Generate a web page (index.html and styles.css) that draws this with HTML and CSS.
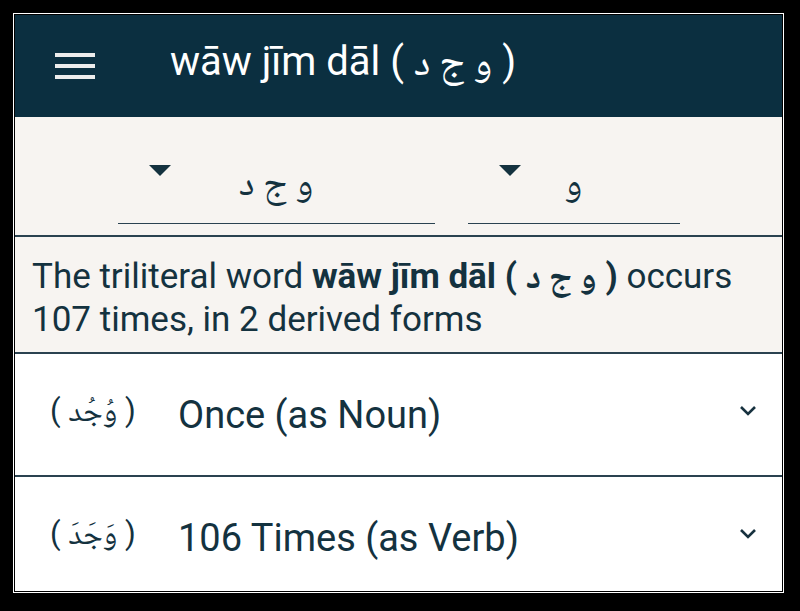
FILE: index.html
```html
<!DOCTYPE html>
<html lang="en">
<head>
    <meta charset="UTF-8">
    <meta name="viewport" content="width=device-width, initial-scale=1.0">
    <title>wāw jīm dāl</title>
    <link rel="stylesheet" href="styles.css">
</head>
<body>

    <div class="frame">
        <div class="screen">

            <header class="app-bar">
                <span class="menu-icon">
                    <span></span><span></span><span></span>
                </span>
                <h1 class="title">wāw jīm dāl ( <span class="ar">و ج د</span> )</h1>
            </header>

            <div class="pickers">
                <div class="picker picker-root">
                    <span class="caret"></span>
                    <span class="picker-value ar">و ج د</span>
                </div>
                <div class="picker picker-letter">
                    <span class="caret"></span>
                    <span class="picker-value ar">و</span>
                </div>
            </div>

            <p class="summary">
                The triliteral word <b>wāw jīm dāl ( <span class="ar">و ج د</span> )</b> occurs<br>
                107 times, in 2 derived forms
            </p>

            <ul class="forms">
                <li class="form-row">
                    <span class="form-ar">( <span class="ar">وُجُد</span> )</span>
                    <span class="form-label">Once (as Noun)</span>
                    <svg class="chevron" width="20" height="12" viewBox="0 0 20 12">
                        <path d="M3 2 L10 9 L17 2" fill="none" stroke="#17323f" stroke-width="2.6"/>
                    </svg>
                </li>
                <li class="form-row">
                    <span class="form-ar">( <span class="ar">وَجَدَ</span> )</span>
                    <span class="form-label">106 Times (as Verb)</span>
                    <svg class="chevron" width="20" height="12" viewBox="0 0 20 12">
                        <path d="M3 2 L10 9 L17 2" fill="none" stroke="#17323f" stroke-width="2.6"/>
                    </svg>
                </li>
            </ul>

        </div>
    </div>

</body>
</html>
```

FILE: styles.css
```css
body {
    margin: 0;
    padding: 13px 0 0 13px;
    background-color: #000;
    font-family: Roboto, "Noto Sans", sans-serif;
    color: #14323f;
}
.frame {
    width: 771px;
    height: 580px;
    border: 1px solid #fff;
    box-sizing: border-box;
}
.screen {
    height: 100%;
    border: 1px solid #000;
    box-sizing: border-box;
    background-color: #fff;
    overflow: hidden;
}
.ar {
    font-family: "Noto Naskh Arabic", "DejaVu Sans", serif;
}

/* top bar */
.app-bar {
    height: 102px;
    background-color: #0b2f40;
    display: flex;
    align-items: center;
    padding-left: 40px;
}
.menu-icon {
    display: flex;
    flex-direction: column;
    gap: 7px;
    width: 40px;
}
.menu-icon span {
    height: 4px;
    background-color: #ececec;
}
.title {
    margin: 0 0 0 75px;
    color: #fff;
    font-size: 40px;
    font-weight: 400;
    white-space: nowrap;
}
.title .ar {
    font-size: 40px;
    letter-spacing: 6px;
}

/* root pickers */
.pickers {
    height: 120px;
    background-color: #f7f4f1;
    border-bottom: 2px solid #2a4250;
    box-sizing: border-box;
    display: flex;
    justify-content: center;
    align-items: flex-end;
    gap: 33px;
    padding-bottom: 11px;
}
.picker {
    display: flex;
    align-items: center;
    height: 74px;
    padding-left: 31px;
    border-bottom: 1.5px solid #2a4250;
    box-sizing: border-box;
}
.picker-root {
    width: 317px;
}
.picker-letter {
    width: 212px;
}
.caret {
    width: 0;
    height: 0;
    border-left: 11px solid transparent;
    border-right: 11px solid transparent;
    border-top: 11px solid #14323f;
    margin-bottom: 32px;
}
.picker-value {
    flex: 1;
    text-align: center;
    padding-right: 53px;
    font-size: 38px;
    letter-spacing: 2px;
}

/* summary */
.summary {
    margin: 0;
    padding: 20px 17px 13px;
    background-color: #f7f4f1;
    border-bottom: 2px solid #2a4250;
    font-size: 35px;
    line-height: 39px;
    white-space: nowrap;
}

/* derived forms */
.forms {
    list-style: none;
    margin: 0;
    padding: 0;
}
.form-row {
    display: flex;
    align-items: center;
    height: 121px;
    padding: 0 24px 0 35px;
    border-bottom: 2px solid #2a4250;
}
.form-row:last-child {
    border-bottom: none;
}
.form-ar {
    width: 128px;
    font-size: 31px;
    white-space: nowrap;
}
.form-ar .ar {
    letter-spacing: 1px;
}
.form-label {
    flex: 1;
    font-size: 38px;
}
.chevron {
    margin-bottom: 8px;
}
```
